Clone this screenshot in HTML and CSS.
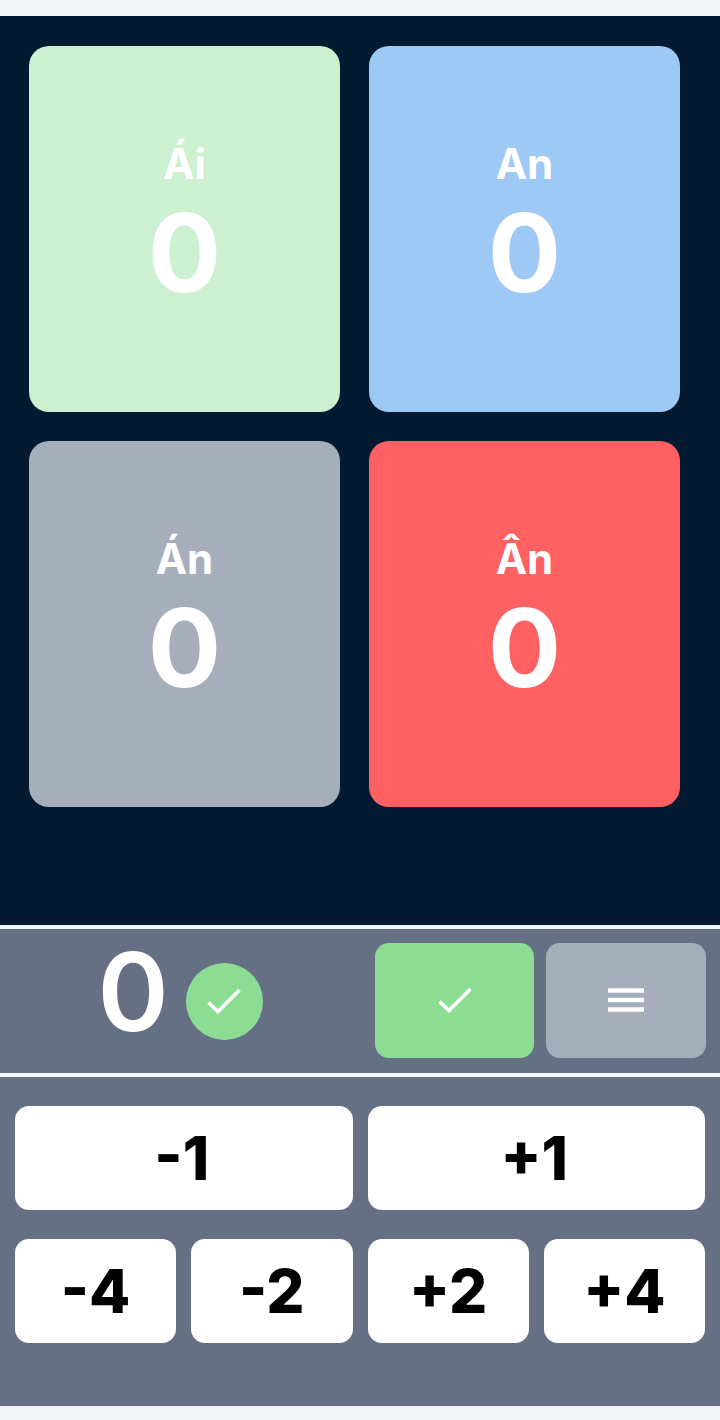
FILE: index.html
```html
<!DOCTYPE html>
<html lang="vi">
<head>
    <meta charset="UTF-8">
    <meta name="viewport" content="width=device-width, initial-scale=1.0">
    <title>Score</title>
    <link rel="stylesheet" href="styles.css">
</head>
<body>
    <div class="app">
        <div class="players">
            <div class="player player-green">
                <div class="player-name">Ái</div>
                <div class="player-score">0</div>
            </div>
            <div class="player player-blue">
                <div class="player-name">An</div>
                <div class="player-score">0</div>
            </div>
            <div class="player player-gray">
                <div class="player-name">Án</div>
                <div class="player-score">0</div>
            </div>
            <div class="player player-red">
                <div class="player-name">Ân</div>
                <div class="player-score">0</div>
            </div>
        </div>

        <div class="status">
            <div class="status-left">
                <span class="current">0</span>
                <span class="badge">
                    <svg class="icon-check" viewBox="0 0 34 26" width="34" height="26"><path d="M1.5 14.5 L11 23.5 L32.5 2" fill="none" stroke="#fff" stroke-width="3.6"/></svg>
                </span>
            </div>
            <div class="status-actions">
                <button class="action action-ok">
                    <svg class="icon-check" viewBox="0 0 34 26" width="34" height="26"><path d="M1.5 14.5 L11 23.5 L32.5 2" fill="none" stroke="#fff" stroke-width="3.6"/></svg>
                </button>
                <button class="action action-menu">
                    <svg viewBox="0 0 36 24" width="36" height="24"><path d="M0 2.5 H36 M0 12 H36 M0 21.5 H36" fill="none" stroke="#fff" stroke-width="4.6"/></svg>
                </button>
            </div>
        </div>

        <div class="keys">
            <button class="key key-wide">-1</button>
            <button class="key key-wide">+1</button>
            <button class="key">-4</button>
            <button class="key">-2</button>
            <button class="key">+2</button>
            <button class="key">+4</button>
        </div>
    </div>
</body>
</html>
```

FILE: styles.css
```css
body {
    margin: 0;
    background-color: #f3f5f8;
    font-family: Inter, sans-serif;
}
.app {
    height: 1420px;
    padding: 16px 0 14px;
    box-sizing: border-box;
    display: flex;
    flex-direction: column;
}
.players {
    height: 909px;
    box-sizing: border-box;
    padding: 30px 40px 0 29px;
    background-color: #031a30;
    display: grid;
    grid-template-columns: 311px 311px;
    grid-auto-rows: 366px;
    gap: 29px;
    align-content: start;
}
.player {
    border-radius: 20px;
    color: white;
    display: flex;
    flex-direction: column;
    align-items: center;
    padding-top: 92px;
    font-weight: 700;
}
.player-green { background-color: #cdf0d0; }
.player-blue { background-color: #9dc9f4; }
.player-gray { background-color: #a6aebb; }
.player-red { background-color: #ff6062; }
.player-name {
    font-size: 42px;
}
.player-score {
    font-size: 109px;
    line-height: 126px;
}
.status {
    margin-top: 4px;
    height: 144px;
    box-sizing: border-box;
    background-color: #667085;
    display: flex;
    align-items: center;
    padding: 0 14px 0 0;
}
.status-left {
    width: 375px;
    display: flex;
    justify-content: center;
    align-items: center;
    gap: 17px;
    padding-right: 15px;
    box-sizing: border-box;
}
.current {
    color: white;
    font-size: 108px;
    line-height: 108px;
    font-weight: 600;
    margin-bottom: 19px;
}
.badge {
    width: 77px;
    height: 77px;
    border-radius: 50%;
    background-color: #8cdc94;
    display: flex;
    justify-content: center;
    align-items: center;
}
.status-actions {
    display: flex;
    gap: 12px;
    margin-bottom: 2px;
}
.action {
    width: 159px;
    height: 115px;
    border: 0;
    padding: 0;
    border-radius: 14px;
    display: flex;
    justify-content: center;
    align-items: center;
}
.action-ok { background-color: #8cdc94; }
.action-menu { background-color: #a6aebb; width: 160px; }
.keys {
    flex: 1;
    margin-top: 4px;
    background-color: #667085;
    padding: 29px 15px 0;
    display: grid;
    grid-template-columns: repeat(4, 1fr);
    grid-auto-rows: 104px;
    gap: 29px 15px;
    align-content: start;
}
.key {
    border: 0;
    padding: 0;
    border-radius: 14px;
    background-color: white;
    color: black;
    font-family: Inter, sans-serif;
    font-weight: 800;
    font-size: 60px;
}
.key-wide {
    grid-column: span 2;
    padding-right: 4px;
}
```
